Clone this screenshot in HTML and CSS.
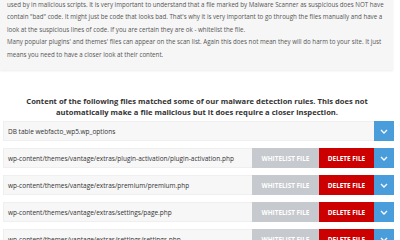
FILE: index.html
```html
<!DOCTYPE html>
<html lang="en">
<head>
    <meta charset="UTF-8">
    <meta name="viewport" content="width=device-width, initial-scale=1.0">
    <title>Malware Scanner</title>
    <link rel="stylesheet" href="styles.css">
</head>
<body>
    <div class="page">
        <div class="notice">
            <p>used by in malicious scripts. It is very important to understand that a file marked by Malware Scanner as suspicious does NOT have contain "bad" code. It might just be code that looks bad. That's why it is very important to go through the files manually and have a look at the suspicious lines of code. If you are certain they are ok - whitelist the file.</p>
            <p>Many popular plugins' and themes' files can appear on the scan list. Again this does not mean they will do harm to your site. It just means you need to have a closer look at their content.</p>
        </div>

        <h3 class="results-title">Content of the following files matched some of our malware detection rules. This does not automatically make a file malicious but it does require a closer inspection.</h3>

        <div class="file-list">
            <div class="file-row">
                <div class="file-name">DB table webfacto_wp5.wp_options</div>
                <button class="btn-toggle"><svg width="8" height="5" viewBox="0 0 8 5"><path d="M1 1l3 3 3-3" fill="none" stroke="#fff" stroke-width="1.3"/></svg></button>
            </div>
            <div class="file-row">
                <div class="file-name">wp-content/themes/vantage/extras/plugin-activation/plugin-activation.php</div>
                <button class="btn-whitelist">Whitelist file</button>
                <button class="btn-delete">Delete file</button>
                <button class="btn-toggle"><svg width="8" height="5" viewBox="0 0 8 5"><path d="M1 1l3 3 3-3" fill="none" stroke="#fff" stroke-width="1.3"/></svg></button>
            </div>
            <div class="file-row">
                <div class="file-name">wp-content/themes/vantage/extras/premium/premium.php</div>
                <button class="btn-whitelist">Whitelist file</button>
                <button class="btn-delete">Delete file</button>
                <button class="btn-toggle"><svg width="8" height="5" viewBox="0 0 8 5"><path d="M1 1l3 3 3-3" fill="none" stroke="#fff" stroke-width="1.3"/></svg></button>
            </div>
            <div class="file-row">
                <div class="file-name">wp-content/themes/vantage/extras/settings/page.php</div>
                <button class="btn-whitelist">Whitelist file</button>
                <button class="btn-delete">Delete file</button>
                <button class="btn-toggle"><svg width="8" height="5" viewBox="0 0 8 5"><path d="M1 1l3 3 3-3" fill="none" stroke="#fff" stroke-width="1.3"/></svg></button>
            </div>
            <div class="file-row">
                <div class="file-name">wp-content/themes/vantage/extras/settings/settings.php</div>
                <button class="btn-whitelist">Whitelist file</button>
                <button class="btn-delete">Delete file</button>
                <button class="btn-toggle"><svg width="8" height="5" viewBox="0 0 8 5"><path d="M1 1l3 3 3-3" fill="none" stroke="#fff" stroke-width="1.3"/></svg></button>
            </div>
        </div>
    </div>
</body>
</html>
```

FILE: styles.css
```css
body {
    margin: 0;
    font-family: "Open Sans", sans-serif;
    background-color: #fff;
    color: #444;
    overflow: hidden;
}
.page {
    width: 394px;
}
.notice {
    width: 393px;
    box-sizing: border-box;
    background-color: #f6f6f6;
    padding: 0 6px 9px 7px;
    margin-top: -1px;
    box-shadow: 0 1px 2px rgba(0, 0, 0, 0.08);
    font-size: 6.2px;
    line-height: 12.4px;
    color: #555;
}
.notice p {
    margin: 0;
}
.results-title {
    margin: 26px 0 0 0;
    padding: 0 14px;
    text-align: center;
    font-size: 7.6px;
    line-height: 11px;
    font-weight: bold;
    color: #333;
}
.file-list {
    margin: 3px 0 0 3px;
}
.file-row {
    display: flex;
    height: 20px;
    margin-bottom: 7px;
    background-color: #f7f7f7;
    border: 1px solid #efefef;
    box-sizing: border-box;
}
.file-name {
    flex: 1;
    display: flex;
    align-items: center;
    padding-left: 4px;
    font-size: 6.5px;
    color: #333;
    white-space: nowrap;
    overflow: hidden;
}
.file-row button {
    border: none;
    margin: -1px 0;
    padding: 0;
    height: 20px;
    font-family: "Open Sans", sans-serif;
    font-size: 6.4px;
    font-weight: bold;
    text-transform: uppercase;
    color: #fff;
    cursor: pointer;
}
.btn-whitelist {
    width: 67px;
    background-color: #c6c9ce;
}
.btn-delete {
    width: 55px;
    background-color: #cc0000;
}
.btn-toggle {
    width: 20px;
    margin-right: -1px !important;
    background-color: #4a9ddb;
    display: flex;
    align-items: center;
    justify-content: center;
}
```
